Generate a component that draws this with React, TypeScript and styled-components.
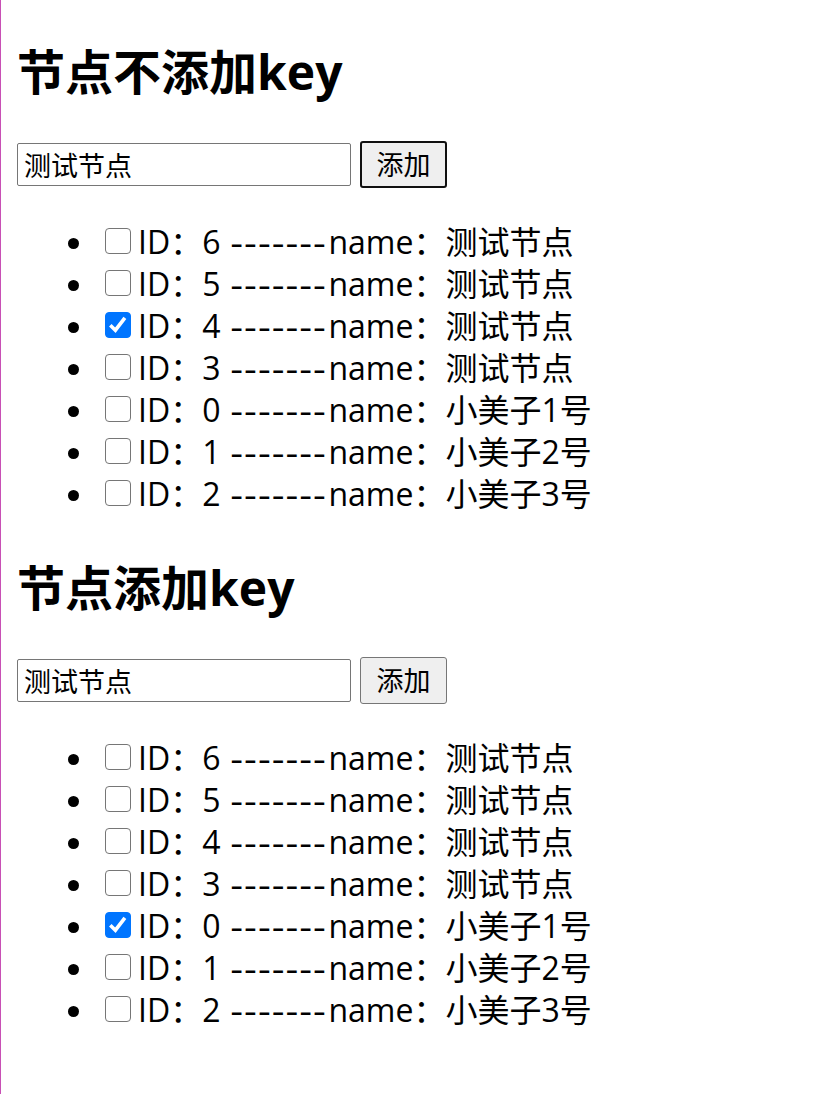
import React, { useState } from "react";
import styled, { createGlobalStyle } from "styled-components";

const GlobalStyle = createGlobalStyle`
  * { box-sizing: border-box; }
  body {
    margin: 0;
    background: #fff;
    color: #000;
    font-family: "Open Sans", "Noto Sans CJK SC", sans-serif;
  }
`;

const Page = styled.main`
  min-height: 100vh;
  padding: 0 16px 64px;
  border-left: 1px solid #c84fb5;
`;

const Section = styled.section`
  padding: 40px 0 1px;
`;

const Title = styled.h2`
  margin: 0;
  font-size: 48px;
  line-height: 64px;
  font-weight: 700;
`;

const Form = styled.form`
  display: flex;
  align-items: center;
  gap: 9px;
  margin-top: 37px;
`;

const NameInput = styled.input`
  width: 334px;
  height: 43px;
  padding: 0 6px;
  border: 1px solid #767676;
  border-radius: 2px;
  background: #fff;
  color: #000;
  font-family: inherit;
  font-size: 27px;
  outline: none;
`;

const AddButton = styled.button<{ $active?: boolean }>`
  height: 47px;
  width: 87px;
  padding: 0;
  border: ${(p) => (p.$active ? "2px solid #101010" : "1px solid #767676")};
  border-radius: 3px;
  background: #efefef;
  color: #000;
  font-family: inherit;
  font-size: 27px;
  line-height: 40px;
`;

const List = styled.ul`
  margin: 33px 0 0;
  padding: 0 0 0 80px;
  list-style: disc;
  font-size: 32px;
  line-height: 42px;
`;

const Item = styled.li`
  height: 42px;
`;

const ItemLabel = styled.label`
  display: inline-flex;
  align-items: center;
  height: 42px;
  padding-left: 8px;
  vertical-align: top;
  white-space: pre;
`;

const CheckWrap = styled.span`
  display: grid;
  width: 26px;
  height: 26px;
  margin: 0 7px 2px 0;

  & > * {
    grid-area: 1 / 1;
  }
`;

const Checkbox = styled.input`
  appearance: none;
  width: 26px;
  height: 26px;
  margin: 0;
  border: 1px solid #767676;
  border-radius: 4px;
  background: #fff;

  &:checked {
    border-color: #0075ff;
    background: #0075ff;
  }
`;

const Tick = styled.svg`
  width: 26px;
  height: 26px;
  pointer-events: none;
`;

const Dashes = styled.span`
  padding: 4px 2px 0 1px;
  font-family: Inter, sans-serif;
  font-size: 30px;
  font-variant-ligatures: none;
`;

type Node = { id: number; name: string };

const nodes: Node[] = [
  { id: 6, name: "测试节点" },
  { id: 5, name: "测试节点" },
  { id: 4, name: "测试节点" },
  { id: 3, name: "测试节点" },
  { id: 0, name: "小美子1号" },
  { id: 1, name: "小美子2号" },
  { id: 2, name: "小美子3号" },
];

function NodeItem({ node, initial }: { node: Node; initial: boolean }) {
  const [checked, setChecked] = useState(initial);
  return (
    <Item>
      <ItemLabel>
        <CheckWrap>
          <Checkbox
            type="checkbox"
            checked={checked}
            onChange={(e) => setChecked(e.target.checked)}
          />
          {checked && (
            <Tick viewBox="0 0 26 26" aria-hidden="true">
              <path d="M5.3 13.2 10.4 18.2 19.9 5.8" fill="none" stroke="#fff" strokeWidth="3.6" />
            </Tick>
          )}
        </CheckWrap>
        <span>ID：{node.id} </span>
        <Dashes>-------</Dashes>
        <span>name：{node.name}</span>
      </ItemLabel>
    </Item>
  );
}

function NodeSection(props: { title: string; checkedId: number; active?: boolean }) {
  const [name, setName] = useState("测试节点");
  return (
    <Section>
      <Title>{props.title}</Title>
      <Form onSubmit={(e) => e.preventDefault()}>
        <NameInput
          type="text"
          aria-label={props.title}
          value={name}
          onChange={(e) => setName(e.target.value)}
        />
        <AddButton type="submit" $active={props.active}>
          添加
        </AddButton>
      </Form>
      <List>
        {nodes.map((node) => (
          <NodeItem key={node.id} node={node} initial={node.id === props.checkedId} />
        ))}
      </List>
    </Section>
  );
}

export default function App() {
  return (
    <>
      <GlobalStyle />
      <Page>
        <NodeSection title="节点不添加key" checkedId={4} active />
        <NodeSection title="节点添加key" checkedId={0} />
      </Page>
    </>
  );
}
